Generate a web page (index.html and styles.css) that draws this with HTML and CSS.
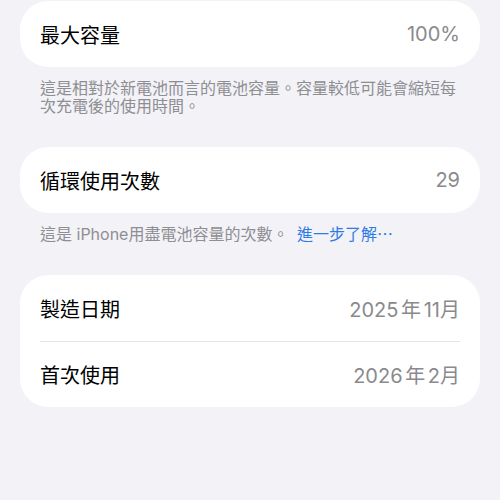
FILE: index.html
```html
<!DOCTYPE html>
<html lang="zh-Hant">
<head>
  <meta charset="UTF-8" />
  <meta name="viewport" content="width=device-width, initial-scale=1.0" />
  <title>電池健康度</title>
  <link rel="stylesheet" href="styles.css">
</head>
<body>
  <div class="page">
    <div class="group">
      <div class="row">
        <span class="label">最大容量</span>
        <span class="value">100%</span>
      </div>
    </div>
    <p class="footer">這是相對於新電池而言的電池容量。容量較低可能會縮短每次充電後的使用時間。</p>

    <div class="group">
      <div class="row">
        <span class="label">循環使用次數</span>
        <span class="value">29</span>
      </div>
    </div>
    <p class="footer">這是 iPhone用盡電池容量的次數。 <a class="link" href="#">進一步了解⋯</a></p>

    <div class="group">
      <div class="row">
        <span class="label">製造日期</span>
        <span class="value">2025 年 11月</span>
      </div>
      <div class="row">
        <span class="label">首次使用</span>
        <span class="value">2026 年 2月</span>
      </div>
    </div>
  </div>
</body>
</html>
```

FILE: styles.css
```css
body {
  margin: 0;
  background-color: #f2f2f7;
  font-family: Inter, "Noto Sans CJK TC", sans-serif;
  color: #000;
}

.page {
  padding: 1px 20px 0;
}

.group {
  background: #fff;
  border-radius: 28px;
  padding: 0 20px;
}

.row {
  display: flex;
  justify-content: space-between;
  align-items: center;
  height: 66px;
  font-size: 20px;
}

.row + .row {
  border-top: 1px solid #e3e3e8;
  height: 65px;
}

.value {
  color: #8a8a8e;
  word-spacing: -3px;
}

.footer {
  margin: 0;
  padding: 12px 20px 32px;
  font-size: 16px;
  line-height: 18px;
  color: #8e8e93;
}

.link {
  color: #2f7ae5;
  text-decoration: none;
  margin-left: 4px;
}
```
